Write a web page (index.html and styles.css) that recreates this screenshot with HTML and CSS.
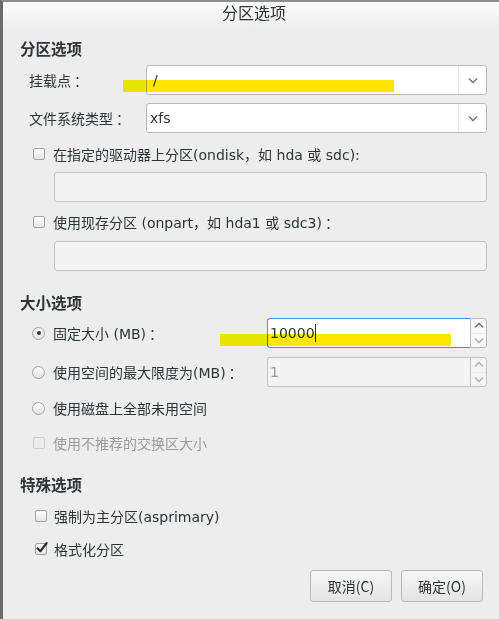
FILE: index.html
```html
<!DOCTYPE html>
<html lang="zh">
<head>
<meta charset="utf-8">
<title>分区选项</title>
<link rel="stylesheet" href="styles.css">
</head>
<body>
<div class="window">
  <div class="titlebar">分区选项</div>
  <div class="content">
    <div class="heading h-first">分区选项</div>

    <div class="field f-mount">
      <span class="label">挂载点<span class="colon">：</span></span>
      <div class="combo">
        <span class="combo-text t-mount">/</span>
        <span class="combo-btn"><svg width="10" height="7" viewBox="0 0 10 7"><polyline points="1,1.5 5,5.5 9,1.5" fill="none" stroke="#7d7d7d" stroke-width="1.6"/></svg></span>
      </div>
    </div>

    <div class="field f-fs">
      <span class="label">文件系统类型<span class="colon">：</span></span>
      <div class="combo">
        <span class="combo-text">xfs</span>
        <span class="combo-btn"><svg width="10" height="7" viewBox="0 0 10 7"><polyline points="1,1.5 5,5.5 9,1.5" fill="none" stroke="#7d7d7d" stroke-width="1.6"/></svg></span>
      </div>
    </div>

    <div class="check-row c-disk">
      <span class="checkbox"></span>
      <span>在指定的驱动器上分区(ondisk<span class="fw">，</span>如 hda 或 sdc):</span>
    </div>
    <div class="entry e-disk"></div>

    <div class="check-row c-part">
      <span class="checkbox"></span>
      <span>使用现存分区 (onpart<span class="fw">，</span>如 hda1 或 sdc3)<span class="colon">：</span></span>
    </div>
    <div class="entry e-part"></div>

    <div class="heading h-size">大小选项</div>

    <div class="size-row s-fixed">
      <div class="radio-label"><span class="radio on"></span><span>固定大小 (MB)<span class="colon">：</span></span></div>
      <div class="spin focus">
        <div class="spin-entry"><span class="caret-text">10000</span></div>
        <div class="spin-btns">
          <span class="sb"><svg width="10" height="7" viewBox="0 0 10 7"><polyline points="1,5.5 5,1.5 9,5.5" fill="none" stroke="#7a7a7a" stroke-width="1.6"/></svg></span>
          <span class="sb"><svg width="10" height="7" viewBox="0 0 10 7"><polyline points="1,1.5 5,5.5 9,1.5" fill="none" stroke="#b0b0b0" stroke-width="1.6"/></svg></span>
        </div>
      </div>
    </div>

    <div class="size-row s-max">
      <div class="radio-label"><span class="radio"></span><span>使用空间的最大限度为(MB)<span class="colon">：</span></span></div>
      <div class="spin disabled">
        <div class="spin-entry"><span>1</span></div>
        <div class="spin-btns">
          <span class="sb"><svg width="10" height="7" viewBox="0 0 10 7"><polyline points="1,5.5 5,1.5 9,5.5" fill="none" stroke="#b4b4b4" stroke-width="1.6"/></svg></span>
          <span class="sb"><svg width="10" height="7" viewBox="0 0 10 7"><polyline points="1,1.5 5,5.5 9,1.5" fill="none" stroke="#b4b4b4" stroke-width="1.6"/></svg></span>
        </div>
      </div>
    </div>

    <div class="size-row s-all">
      <div class="radio-label"><span class="radio"></span><span>使用磁盘上全部未用空间</span></div>
    </div>

    <div class="check-row c-swap disabled-text">
      <span class="checkbox dis"></span>
      <span>使用不推荐的交换区大小</span>
    </div>

    <div class="heading h-special">特殊选项</div>

    <div class="check-row special c-primary">
      <span class="checkbox"></span>
      <span>强制为主分区(asprimary)</span>
    </div>
    <div class="check-row special c-format">
      <span class="checkbox checked"><svg width="14" height="14" viewBox="0 0 14 14"><path d="M2.5 7.2 L5.3 10.2 L11.6 2.2" fill="none" stroke="#2e3436" stroke-width="2.2" stroke-linecap="round" stroke-linejoin="round"/></svg></span>
      <span>格式化分区</span>
    </div>

    <div class="buttons">
      <button class="btn">取消(C)</button>
      <button class="btn">确定(O)</button>
    </div>
  </div>

  <span class="hl hl-mount"></span>
  <span class="hl hl-size"></span>
</div>
</body>
</html>
```

FILE: styles.css
```css
* { box-sizing: border-box; }
html, body { margin: 0; height: 100%; }
body {
  background: #ededed;
  font-family: "DejaVu Sans", "Noto Sans CJK SC", sans-serif;
  font-size: 14px;
  color: #2e3436;
  overflow: hidden;
}
.window {
  position: relative;
  height: 619px;
  border-top: 2px solid #8e8e8e;
  border-left: 3px solid #6b6b6b;
  background: #ededed;
}
.titlebar {
  height: 26px;
  background: linear-gradient(#fcfcfc, #ededed);
  text-align: center;
  font-family: "Noto Sans CJK SC", sans-serif;
  font-size: 16px;
  line-height: 21px;
  padding-left: 6px;
  color: #2e3436;
}
.content { padding: 0 12px 0 17px; }
.heading {
  height: 20px;
  line-height: 20px;
  font-family: "Noto Sans CJK SC", sans-serif;
  font-size: 15.5px;
  font-weight: bold;
  color: #2e3436;
}
.h-first { margin-top: 10px; }
.h-size { margin-top: 21px; }
.h-special { margin-top: 21px; }

.fw { font-family: "Noto Sans CJK SC", sans-serif; }
.colon { font-family: "Noto Sans CJK TC", sans-serif; margin-left: 3px; }

.field { display: flex; align-items: center; height: 30px; }
.f-mount { margin-top: 7px; }
.f-fs { margin-top: 8px; }
.label { width: 126px; padding-left: 9px; }
.combo {
  flex: 1;
  height: 30px;
  display: flex;
  background: #fff;
  border: 1px solid #b8b8b5;
  border-radius: 3px;
}
.combo-text { flex: 1; padding-left: 3px; line-height: 28px; }
.t-mount { padding-left: 6px; }
.combo-btn {
  width: 28px;
  border-left: 1px solid #e6e6e6;
  display: flex;
  align-items: center;
  justify-content: center;
}

.check-row {
  display: flex;
  align-items: center;
  gap: 8px;
  height: 20px;
  padding-left: 13px;
}
.c-disk { margin-top: 11px; }
.c-part { margin-top: 10px; }
.c-swap { margin-top: 15px; }
.c-primary { margin-top: 12px; }
.c-format { margin-top: 13px; }
.check-row.special { padding-left: 15px; gap: 7px; }
.disabled-text { color: #9a9c9c; }

.checkbox {
  position: relative;
  width: 12px;
  height: 12px;
  border: 1px solid #a3a3a0;
  border-radius: 2px;
  background: linear-gradient(#fdfdfd, #e4e4e4);
  flex: none;
}
.checkbox.dis { border-color: #cfcfcd; background: #ececec; }
.checkbox.checked svg { position: absolute; left: -1px; top: -3px; }

.entry {
  margin-left: 34px;
  height: 30px;
  background: #f4f4f4;
  border: 1px solid #c3c3c0;
  border-radius: 3px;
}
.e-disk { margin-top: 8px; }
.e-part { margin-top: 9px; }

.size-row {
  display: grid;
  grid-template-columns: 235px 1fr;
  align-items: center;
  height: 30px;
  padding-left: 12px;
}
.s-fixed { margin-top: 6px; }
.s-max { margin-top: 9px; }
.s-all { margin-top: 11px; height: 20px; }
.radio-label { display: flex; align-items: center; gap: 8px; }
.radio {
  position: relative;
  width: 13px;
  height: 13px;
  border: 1px solid #a3a3a0;
  border-radius: 50%;
  background: linear-gradient(#fdfdfd, #e2e2e2);
  flex: none;
}
.radio.on::after {
  content: "";
  position: absolute;
  left: 3.5px;
  top: 3.5px;
  width: 4px;
  height: 4px;
  border-radius: 50%;
  background: #2e3436;
}

.spin { display: flex; height: 30px; }
.spin-entry {
  flex: 1;
  display: flex;
  align-items: center;
  padding-left: 2px;
  border: 1px solid #4a90d9;
  border-right: none;
  border-radius: 3px 0 0 3px;
  background: #fff;
}
.caret-text { border-right: 1px solid #2e3436; line-height: 18px; }
.spin-btns {
  width: 17px;
  display: flex;
  flex-direction: column;
  border: 1px solid #b8b8b5;
  border-radius: 0 3px 3px 0;
  background: #f9f9f9;
}
.sb { flex: 1; display: flex; align-items: center; justify-content: center; }
.sb + .sb { border-top: 1px solid #ececec; }
.spin.disabled .spin-entry { background: #f4f4f4; border-color: #c3c3c0; color: #9a9c9c; }
.spin.disabled .spin-btns { background: #f4f4f4; border-color: #c3c3c0; }

.buttons {
  display: flex;
  justify-content: flex-end;
  gap: 9px;
  margin-top: 11px;
  padding-right: 4px;
}
.btn {
  width: 82px;
  height: 32px;
  font-family: "Noto Sans CJK SC", "DejaVu Sans", sans-serif;
  font-size: 14px;
  color: #2e3436;
  border: 1px solid #b8b8b5;
  border-radius: 3px;
  background: linear-gradient(#f6f6f6, #e4e4e4);
  padding: 0;
}

.hl {
  position: absolute;
  height: 12px;
  mix-blend-mode: multiply;
}
.hl-mount {
  left: 120px;
  top: 78px;
  width: 271px;
  background: linear-gradient(to right, #f8f600 0, #f8f600 23px, #ffe600 23px);
}
.hl-size {
  left: 217px;
  top: 332px;
  width: 231px;
  background: linear-gradient(to right, #f8f600 0, #f8f600 47px, #ffe600 47px);
}
```
